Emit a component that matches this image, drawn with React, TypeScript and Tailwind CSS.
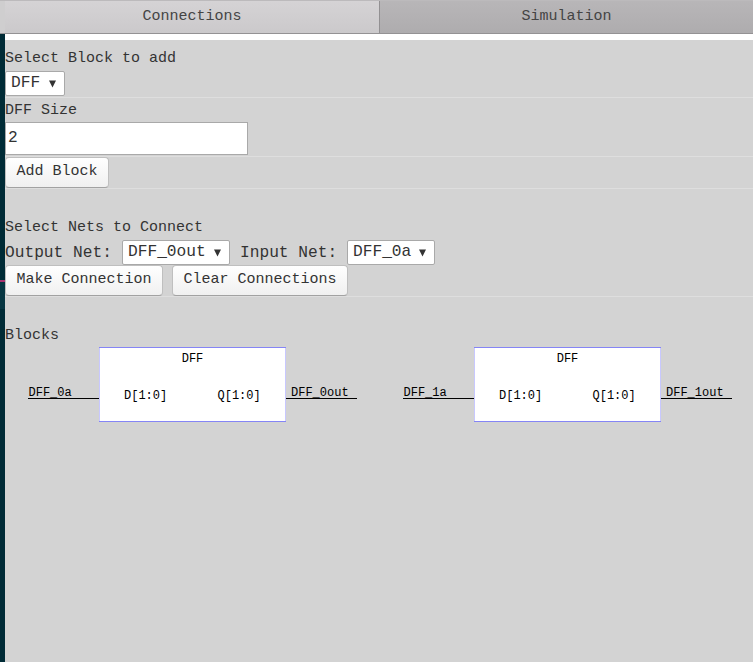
import React from "react";

function Select({ value, className }: { value: string; className: string }) {
  return (
    <button
      className={`flex h-[25px] shrink-0 items-center justify-between rounded-[2px] border border-[#a9a9a9] bg-white pl-[5px] pr-[7px] text-[16.2px] leading-[23px] ${className}`}
    >
      <span>{value}</span>
      <svg width="9" height="8" viewBox="0 0 9 8" className="shrink-0">
        <path d="M1 0.5h7L4.5 7.5z" fill="#333" />
      </svg>
    </button>
  );
}

function Button({ label, className }: { label: string; className: string }) {
  return (
    <button
      className={`h-[31px] rounded-[4px] border border-[#bfbfbf] border-b-[#a2a2a2] bg-linear-to-b from-white to-[#f0f0f0] pb-[2px] text-[15px] leading-[28px] ${className}`}
    >
      {label}
    </button>
  );
}

function Block({ index }: { index: number }) {
  return (
    <svg width="375" height="90" viewBox="0 0 375 90" className="shrink-0 text-[12px]">
      <g shapeRendering="crispEdges">
        <rect x="94" y="2" width="187" height="75" fill="#c8c8ff" />
        <rect x="95" y="3" width="185" height="73" fill="white" />
        <rect x="94" y="2" width="187" height="1" fill="#8585f5" />
        <rect x="94" y="76" width="187" height="1" fill="#8585f5" />
        <rect x="23" y="53" width="71" height="1" fill="black" />
        <rect x="281" y="53" width="71" height="1" fill="black" />
      </g>
      <text x="187.5" y="17" textAnchor="middle">DFF</text>
      <text x="23.5" y="51">{`DFF_${index}a`}</text>
      <text x="119" y="54">D[1:0]</text>
      <text x="212.5" y="54">Q[1:0]</text>
      <text x="286" y="51">{`DFF_${index}out`}</text>
    </svg>
  );
}

export default function App() {
  return (
    <div className="flex h-[662px] w-[753px] flex-col overflow-hidden bg-white font-['Liberation_Mono',monospace] text-[15px] text-[#333]">
      <header className="flex h-[34px] shrink-0 border-t border-b border-t-[#bcbabc] border-b-[#949294] bg-[#cfcecf] pl-[5px] leading-[31px]">
        <div className="w-[374px] bg-linear-to-b from-[#d5d3d5] to-[#cbc9cb] text-center text-[#444]">Connections</div>
        <div className="flex-1 border-l border-[#929092] bg-linear-to-b from-[#b8b6b8] to-[#aeacae] text-center text-[#444]">Simulation</div>
      </header>
      <div className="flex min-h-0 flex-1">
        <aside className="flex w-[5px] shrink-0 flex-col bg-[#002b36]">
          <div className="h-[246px]" />
          <div className="h-[2px] bg-[#a8326f]" />
          <div className="h-[27px] bg-[#073642]" />
        </aside>
        <main className="mt-[6px] min-w-0 flex-1 bg-[#d3d3d3]">
          <section className="h-[58px] border-b border-[#dedede] pt-[7px]">
            <div className="h-[24px] leading-[23px]">Select Block to add</div>
            <Select value="DFF" className="w-[60px]" />
          </section>
          <section className="h-[59px] border-b border-[#dedede]">
            <div className="h-[24px] leading-[25px]">DFF Size</div>
            <input
              defaultValue="2"
              className="block h-[33px] w-[243px] border border-[#a9a9a9] bg-white px-[2px] pb-[2px] text-[16.2px] outline-none"
            />
          </section>
          <section className="h-[32px] border-b border-[#dedede]">
            <Button label="Add Block" className="w-[104px]" />
          </section>
          <section className="h-[108px] border-b border-[#dedede] pt-[27px]">
            <div className="h-[24px] leading-[23px]">Select Nets to Connect</div>
            <div className="flex h-[25px] items-center text-[16.2px] leading-[24px]">
              <span className="w-[117px]">Output Net:</span>
              <Select value="DFF_0out" className="w-[108px]" />
              <span className="ml-[10px] w-[107px]">Input Net:</span>
              <Select value="DFF_0a" className="w-[88px]" />
            </div>
            <div className="flex gap-[9px]">
              <Button label="Make Connection" className="w-[158px]" />
              <Button label="Clear Connections" className="w-[176px]" />
            </div>
          </section>
          <section className="pt-[27px]">
            <div className="h-[21px] leading-[23px]">Blocks</div>
            <div className="flex text-black">
              <Block index={0} />
              <Block index={1} />
            </div>
          </section>
        </main>
      </div>
    </div>
  );
}
